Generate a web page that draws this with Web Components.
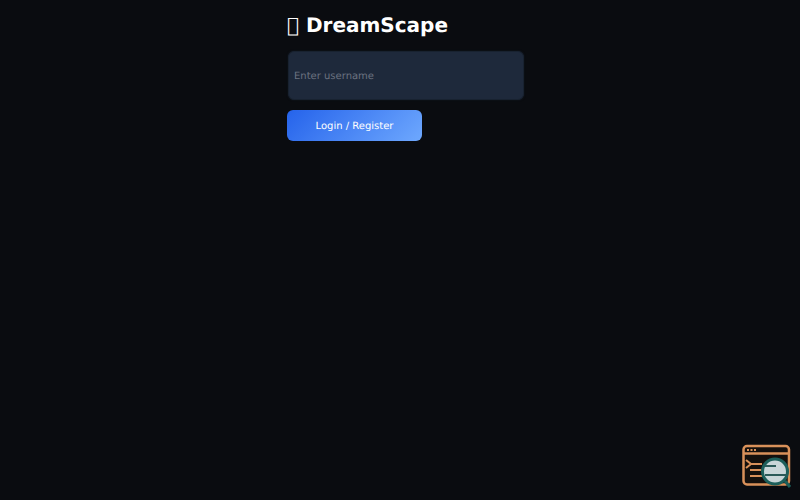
<!DOCTYPE html>
<html lang="en">
<head>
<meta charset="utf-8">
<title>DreamScape</title>
<style>
  html, body { margin: 0; height: 100%; background: #0a0c10; }
  body { font-family: "DejaVu Sans", sans-serif; color: #fff; overflow: hidden; text-rendering: geometricPrecision; }
</style>
</head>
<body>
<login-page>
  <span slot="title">&#xE000; DreamScape</span>
  <login-form></login-form>
</login-page>
<devtools-badge></devtools-badge>

<script>
const templatePage = document.createElement('template');
templatePage.innerHTML = `
  <style>
    :host { display: block; width: 226px; margin: 0 auto; padding-top: 12px; }
    h1 { margin: 0 0 13px 0; font-size: 20px; line-height: 26px; font-weight: 700; color: #fff; white-space: nowrap; }
  </style>
  <h1><slot name="title"></slot></h1>
  <slot></slot>
`;

class LoginPage extends HTMLElement {
  constructor() {
    super();
    this._shadow = this.attachShadow({ mode: 'open' });
    this._shadow.appendChild(templatePage.content.cloneNode(true));
  }
}

const templateForm = document.createElement('template');
templateForm.innerHTML = `
  <style>
    :host { display: flex; flex-direction: column; align-items: flex-start; gap: 10px; }
    input {
      width: 236px;
      height: 49px;
      margin-left: 1px;
      flex: none;
      box-sizing: border-box;
      padding: 2px 5px 0;
      border: 1px solid #182230;
      border-radius: 6px;
      background: #1e293b;
      box-shadow: 0 0 2px rgba(30,41,59,0.5);
      color: #fff;
      font-family: inherit;
      font-size: 10px;
      text-rendering: geometricPrecision;
      outline: none;
    }
    input::placeholder { color: #6b7280; opacity: 1; }
    button {
      width: 135px;
      height: 31px;
      padding: 2px 0 0;
      border: none;
      border-radius: 6px;
      background: linear-gradient(135deg, #2563eb, #6ea8fe);
      color: #fff;
      font-family: inherit;
      font-size: 10px;
      text-rendering: geometricPrecision;
      cursor: pointer;
    }
  </style>
  <input type="text" placeholder="Enter username">
  <button>Login / Register</button>
`;

class LoginForm extends HTMLElement {
  constructor() {
    super();
    this._shadow = this.attachShadow({ mode: 'open' });
    this._shadow.appendChild(templateForm.content.cloneNode(true));
  }
}

const templateBadge = document.createElement('template');
templateBadge.innerHTML = `
  <style>
    :host { display: block; position: fixed; right: 8px; bottom: 12px; width: 50px; height: 44px; }
    svg { display: block; overflow: visible; }
  </style>
  <svg width="50" height="44" viewBox="0 0 50 44" fill="none">
    <rect x="1.5" y="2" width="45.5" height="38.5" rx="3.5" fill="#14100d" stroke="#d9915a" stroke-width="2.5"/>
    <line x1="1.5" y1="9.5" x2="47" y2="9.5" stroke="#d9915a" stroke-width="2.5"/>
    <g fill="#d9915a"><rect x="5" y="5" width="2" height="2"/><rect x="8.5" y="5" width="2" height="2"/><rect x="12" y="5" width="2" height="2"/></g>
    <path d="M4 16l5 4-5 4" stroke="#d9915a" stroke-width="2"/>
    <path d="M8 20h12M8 26h12M8 32h13" stroke="#d9915a" stroke-width="2"/>
    <circle cx="33" cy="27.5" r="12.5" fill="#c8d6d8" stroke="#1c5f5a" stroke-width="3"/>
    <path d="M23 22h11M23 31h22" stroke="#2a5a58" stroke-width="1.8"/>
    <path d="M43 37l5 6" stroke="#1c5f5a" stroke-width="3"/>
  </svg>
`;

class DevtoolsBadge extends HTMLElement {
  constructor() {
    super();
    this._shadow = this.attachShadow({ mode: 'open' });
    this._shadow.appendChild(templateBadge.content.cloneNode(true));
  }
}

customElements.define('login-page', LoginPage);
customElements.define('login-form', LoginForm);
customElements.define('devtools-badge', DevtoolsBadge);
</script>
</body>
</html>
